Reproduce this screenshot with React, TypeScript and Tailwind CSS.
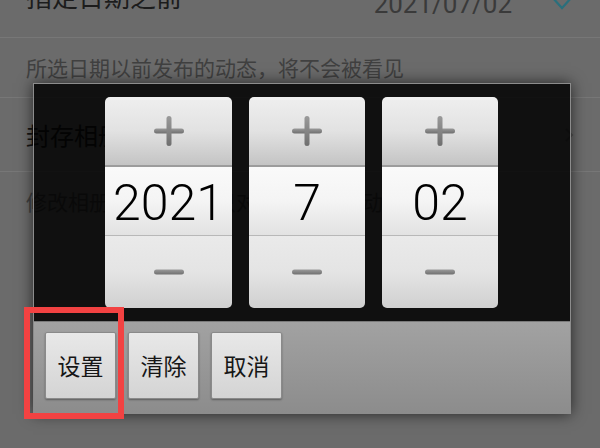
const cjk = { fontFamily: '"Noto Sans CJK SC", "Noto Sans", sans-serif' };

function PlusIcon() {
    return (
        <svg width="32" height="32" viewBox="0 0 32 32">
            <defs>
                <linearGradient id="pg" x1="0" y1="0" x2="0" y2="1">
                    <stop offset="0" stopColor="#9a9a9a" />
                    <stop offset="1" stopColor="#6f6f6f" />
                </linearGradient>
            </defs>
            <rect x="1" y="13.5" width="30" height="5" rx="2.5" fill="url(#pg)" />
            <rect x="13.5" y="1" width="5" height="30" rx="2.5" fill="url(#pg)" />
        </svg>
    );
}

function MinusIcon() {
    return (
        <svg width="32" height="8" viewBox="0 0 32 8">
            <defs>
                <linearGradient id="mg" x1="0" y1="0" x2="0" y2="1">
                    <stop offset="0" stopColor="#9a9a9a" />
                    <stop offset="1" stopColor="#707070" />
                </linearGradient>
            </defs>
            <rect x="1" y="1.5" width="30" height="5" rx="2.5" fill="url(#mg)" />
        </svg>
    );
}

function Spinner({ value, width }: { value: string; width: string }) {
    return (
        <div className={`flex flex-col h-[211px] rounded-[5px] overflow-hidden ${width}`}>
            <div className="h-[68px] flex items-center justify-center bg-gradient-to-b from-[#efefef] via-[#e2e2e2] to-[#c4c4c4]">
                <PlusIcon />
            </div>
            <div className="h-[2px] bg-[#9c9c9c]" />
            <div className="h-[69px] flex items-center justify-center pt-[4px] bg-gradient-to-b from-[#fafafa] via-[#f4f4f4] to-[#e2e2e2] border-b border-[#b8b8b8]">
                <span className="text-[50px] font-light leading-none text-black" style={{ fontFamily: 'Roboto, "Liberation Sans", sans-serif' }}>
                    {value}
                </span>
            </div>
            <div className="flex-1 flex items-center justify-center bg-gradient-to-b from-[#eaeaea] via-[#e4e4e4] to-[#d0d0d0]">
                <MinusIcon />
            </div>
        </div>
    );
}

function DialogButton({ label }: { label: string }) {
    return (
        <button
            className="w-[71px] h-[67px] flex items-center justify-center bg-gradient-to-b from-[#e8e8e8] to-[#d4d4d4] border border-[#8a8a8a] rounded-[2px] shadow-[0_1px_2px_rgba(0,0,0,0.35)] text-[23px] text-[#161616]"
            style={cjk}
        >
            {label}
        </button>
    );
}

export default function App() {
    return (
        <div className="relative w-[600px] h-[448px] overflow-hidden bg-[#6b6b6b]" style={cjk}>
            {/* Background settings list (dimmed) */}
            <div className="flex items-center h-[84px] -mt-[46px] px-[26px] border-b border-[#777777]">
                <span className="text-[26px] text-[#1c1c1c]">指定日期之前</span>
                <span className="ml-auto mt-[18px] text-[26px] text-[#3a3a3a]" style={{ fontFamily: 'Roboto, "Liberation Sans", sans-serif' }}>
                    2021/07/02
                </span>
                <svg className="ml-[38px] mt-[14px]" width="24" height="16" viewBox="0 0 24 16">
                    <path d="M2 2 L12 13 L22 2" fill="none" stroke="#2a6f7c" strokeWidth="2.2" />
                </svg>
            </div>
            <div className="flex items-center h-[60px] px-[26px] border-b border-[#777777]">
                <span className="text-[21px] text-[#404040]">所选日期以前发布的动态，将不会被看见</span>
            </div>
            <div className="flex items-center h-[74px] px-[26px] border-b border-[#777777]">
                <span className="text-[24px] text-[#151515]">封存相册</span>
                <svg className="ml-auto" width="10" height="16" viewBox="0 0 10 16">
                    <path d="M2 2 L8 8 L2 14" fill="none" stroke="#555555" strokeWidth="2" />
                </svg>
            </div>
            <div className="flex items-start h-[80px] px-[26px] pt-[14px]">
                <span className="text-[21px] text-[#404040]">修改相册可见范围，只对以后发布的动态生效</span>
            </div>

            {/* Date picker dialog */}
            <div className="absolute left-[33px] top-[83px] w-[538px] h-[331px] flex flex-col border border-[#8c8c8c] shadow-[0_0_14px_rgba(0,0,0,0.65)]">
                <div className="h-[237px] bg-black/85 flex items-start gap-[17px] pl-[71px] pt-[13px]">
                    <Spinner value="2021" width="w-[127px]" />
                    <Spinner value="7" width="w-[116px]" />
                    <Spinner value="02" width="w-[116px]" />
                </div>
                <div className="flex-1 flex items-start gap-[12px] pl-[11px] pt-[10px] bg-gradient-to-b from-[#a2a2a2] via-[#979797] to-[#8c8c8c] border-t border-[#7a7a7a]">
                    <DialogButton label="设置" />
                    <DialogButton label="清除" />
                    <DialogButton label="取消" />
                </div>
            </div>

            {/* Highlight annotation */}
            <div className="absolute left-[24px] top-[307px] w-[100px] h-[112px] border-[6px] border-[#f24242]" />
        </div>
    );
}
